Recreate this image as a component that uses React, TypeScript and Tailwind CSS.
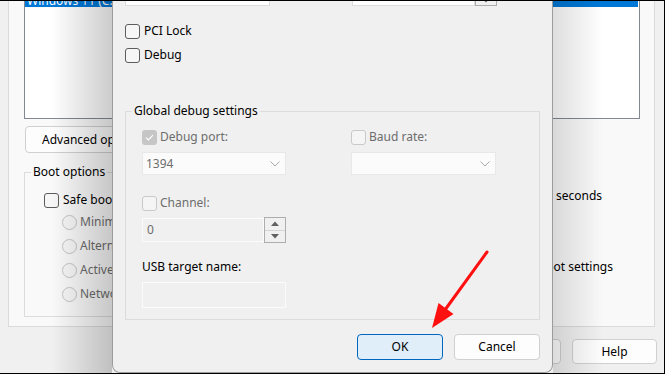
import React from "react";

type BoxState = "on" | "dis" | "disOn";

function Box({ state }: { state: BoxState }) {
  if (state === "disOn") {
    return (
      <div className="flex h-[15px] w-[15px] shrink-0 items-center justify-center rounded-[3px] bg-[#c6c6c6]">
        <svg width="9" height="7" viewBox="0 0 9 7">
          <polyline points="1,3.6 3.4,6 8,1.2" fill="none" stroke="#ffffff" strokeWidth="1.2" />
        </svg>
      </div>
    );
  }
  if (state === "dis") {
    return <div className="h-[15px] w-[15px] shrink-0 rounded-[3px] border border-[#c9c9c9] bg-[#f5f5f5]" />;
  }
  return <div className="h-[15px] w-[15px] shrink-0 rounded-[3px] border border-[#5c5c5c] bg-[#f6f6f6]" />;
}

function Radio() {
  return <div className="h-[15px] w-[15px] shrink-0 rounded-full border border-[#c4c4c4] bg-[#f7f7f7]" />;
}

function Chevron() {
  return (
    <svg width="10" height="6" viewBox="0 0 10 6">
      <polyline points="0.5,0.5 5,5 9.5,0.5" fill="none" stroke="#a8a8a8" strokeWidth="1" />
    </svg>
  );
}

function Spin({ h }: { h: string }) {
  return (
    <div className={`flex w-[22px] flex-col border border-[#adadad] bg-[#f0f0f0] ${h}`}>
      <div className="flex flex-1 items-center justify-center border-b border-[#d4d4d4]">
        <svg width="8" height="5" viewBox="0 0 8 5">
          <polygon points="0,5 4,0.5 8,5" fill="#606060" />
        </svg>
      </div>
      <div className="flex flex-1 items-center justify-center">
        <svg width="8" height="5" viewBox="0 0 8 5">
          <polygon points="0,0 4,4.5 8,0" fill="#606060" />
        </svg>
      </div>
    </div>
  );
}

export default function App() {
  return (
    <div className="relative h-[374px] w-[665px] overflow-hidden border-t border-r border-b border-black bg-[#f0f0f0] font-['Noto_Sans',sans-serif] text-[12px] leading-[16px] text-black">
      {/* background msconfig window: tab page */}
      <div className="ml-[8px] h-[326px] w-[647px] border-r border-b border-l border-[#dadada] bg-[#f9f9f9] pl-[15px]">
        {/* OS list */}
        <div className="h-[118px] w-[616px] overflow-hidden border-r border-b border-l border-[#828790] bg-white">
          <div className="-mt-[12px] mr-[1px] h-[18px] overflow-hidden bg-[#0078d7] pl-[2px] leading-[23px] whitespace-nowrap text-white">
            Windows 11 (C:\Windows) : Current OS; Default OS
          </div>
        </div>
        <div className="mt-[7px] ml-[1px] flex h-[27px] w-[130px] items-center rounded-[4px] border border-[#d0d0d0] bg-[#fdfdfd] pl-[16px] whitespace-nowrap">
          Advanced options...
        </div>
        <div className="mt-[11px] flex">
          <fieldset className="h-[153px] w-[400px] border border-[#dcdcdc]">
            <legend className="ml-[6px] px-[2px]">Boot options</legend>
            <div className="mt-[11px] flex h-[18px] items-center gap-[4px] pl-[19px]">
              <Box state="on" />
              <span>Safe boot</span>
            </div>
            <div className="mt-[4px] flex flex-col gap-[6px] pl-[37px] text-[#6d6d6d]">
              <div className="flex h-[18px] items-center gap-[3px]">
                <Radio />
                <span>Minimal</span>
              </div>
              <div className="flex h-[18px] items-center gap-[3px]">
                <Radio />
                <span>Alternate shell</span>
              </div>
              <div className="flex h-[18px] items-center gap-[3px]">
                <Radio />
                <span>Active Directory repair</span>
              </div>
              <div className="flex h-[18px] items-center gap-[3px]">
                <Radio />
                <span>Network</span>
              </div>
            </div>
          </fieldset>
          <div className="ml-[16px] flex flex-col">
            <div className="mt-[21px] flex h-[22px] items-center">
              <span className="w-[50px]">Timeout:</span>
              <div className="h-[22px] w-[60px] border border-[#d0d0d0] bg-white" />
              <span className="ml-[6px]">seconds</span>
            </div>
            <div className="mt-[52px] flex items-start gap-[4px]">
              <Box state="on" />
              <div className="w-[154px] whitespace-nowrap">
                <div className="text-right">Make all boot settings</div>
                <div>permanent</div>
              </div>
            </div>
          </div>
        </div>
      </div>
      {/* background window buttons */}
      <div className="mt-[12px] flex justify-end gap-[11px] pr-[7px]">
        {["OK", "Cancel", "Apply", "Help"].map((t) => (
          <div
            key={t}
            className="flex h-[25px] w-[85px] items-center justify-center rounded-[4px] border border-[#d0d0d0] bg-[#fdfdfd]"
          >
            {t}
          </div>
        ))}
      </div>

      {/* dialog shadows */}
      <div className="absolute top-0 bottom-0 left-[52px] w-[60px] bg-linear-to-r from-[rgba(0,0,0,0)] to-[rgba(0,0,0,0.2)]" />
      <div className="absolute top-0 bottom-0 left-[553px] w-[50px] bg-linear-to-l from-[rgba(0,0,0,0)] to-[rgba(0,0,0,0.13)]" />

      {/* Advanced options dialog */}
      <div className="absolute top-0 bottom-0 left-[112px] flex w-[441px] flex-col rounded-b-[8px] border-r border-b border-l border-[#9c9c9c] bg-[#f0f0f0] px-[12px]">
        <div className="-mt-[17px] flex h-[22px] shrink-0">
          <div className="h-[22px] w-[145px] border border-[#dcdcdc] bg-white" />
          <div className="ml-[82px] flex h-[22px] w-[145px]">
            <div className="h-[22px] flex-1 border border-[#dcdcdc] bg-white" />
            <Spin h="h-[22px]" />
          </div>
        </div>
        <div className="mt-[16px] flex h-[18px] shrink-0 items-center gap-[4px]">
          <Box state="on" />
          <span>PCI Lock</span>
        </div>
        <div className="mt-[6px] flex h-[18px] shrink-0 items-center gap-[4px]">
          <Box state="on" />
          <span>Debug</span>
        </div>
        <fieldset className="mt-[39px] h-[217px] w-[415px] shrink-0 border border-[#dcdcdc]">
          <legend className="ml-[6px] px-[2px]">Global debug settings</legend>
          <div className="pl-[16px]">
            <div className="mt-[9px] flex text-[#6d6d6d]">
              <div className="flex h-[18px] w-[144px] items-center gap-[3px]">
                <Box state="disOn" />
                <span>Debug port:</span>
              </div>
              <div className="ml-[65px] flex h-[18px] items-center gap-[3px]">
                <Box state="dis" />
                <span>Baud rate:</span>
              </div>
            </div>
            <div className="mt-[6px] flex text-[#6d6d6d]">
              <div className="flex h-[23px] w-[144px] items-center justify-between border border-[#e8e8e8] bg-[#fbfbfb] pr-[5px] pl-[3px]">
                <span>1394</span>
                <Chevron />
              </div>
              <div className="ml-[65px] flex h-[23px] w-[145px] items-center justify-end border border-[#e8e8e8] bg-[#fbfbfb] pr-[5px]">
                <Chevron />
              </div>
            </div>
            <div className="mt-[19px] flex h-[18px] items-center gap-[3px] text-[#6d6d6d]">
              <Box state="dis" />
              <span>Channel:</span>
            </div>
            <div className="mt-[5px] flex h-[26px] w-[144px] items-center text-[#6d6d6d]">
              <div className="flex h-[24px] flex-1 items-center border border-[#fbfbfb] pl-[4px]">0</div>
              <Spin h="h-[26px]" />
            </div>
            <div className="mt-[16px]">USB target name:</div>
            <div className="mt-[7px] h-[26px] w-[144px] border border-[#fbfbfb]" />
          </div>
        </fieldset>
        <div className="mt-[14px] flex shrink-0 justify-end gap-[11px]">
          <div className="flex h-[26px] w-[86px] items-center justify-center rounded-[4px] border border-[#0067c0] bg-[#e0eef9]">
            OK
          </div>
          <div className="flex h-[26px] w-[86px] items-center justify-center rounded-[4px] border border-[#d0d0d0] bg-[#fdfdfd]">
            Cancel
          </div>
        </div>
      </div>

      {/* red arrow annotation */}
      <svg className="pointer-events-none absolute top-0 left-0" width="665" height="373" viewBox="0 -1 665 373">
        <line x1="487" y1="250" x2="442" y2="312" stroke="#ff1010" strokeWidth="3" strokeLinecap="round" />
        <polygon points="432,326 438.5,301 453.5,312" fill="#ff1010" />
      </svg>
    </div>
  );
}
